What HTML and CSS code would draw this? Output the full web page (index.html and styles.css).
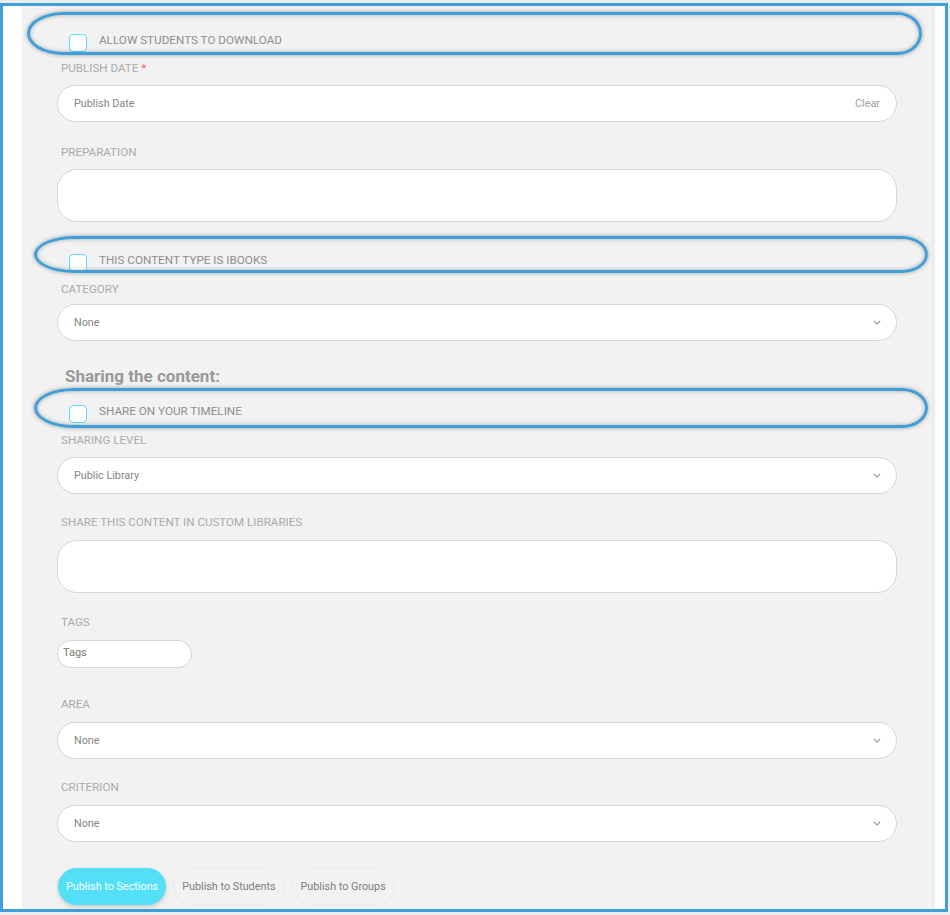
FILE: index.html
```html
<!DOCTYPE html>
<html>
<head>
<meta charset="utf-8">
<link rel="stylesheet" href="styles.css">
</head>
<body>
<div class="frame">
  <div class="panel">
    <div class="check check-first"><span class="box"></span><span class="check-text">ALLOW STUDENTS TO DOWNLOAD</span></div>

    <div class="field field-tight">
      <div class="label">PUBLISH DATE <span class="req">*</span></div>
      <div class="input"><span class="ph">Publish Date</span><span class="clear">Clear</span></div>
    </div>

    <div class="field">
      <div class="label">PREPARATION</div>
      <div class="textarea"></div>
    </div>

    <div class="check check-mid"><span class="box"></span><span class="check-text">THIS CONTENT TYPE IS IBOOKS</span></div>

    <div class="field field-after-check">
      <div class="label label-close">CATEGORY</div>
      <div class="input select"><span class="ph">None</span><svg class="chev" width="8" height="5" viewBox="0 0 8 5"><polyline points="0.8,0.8 4,4 7.2,0.8" fill="none" stroke="#8a96a8" stroke-width="1.1"/></svg></div>
    </div>

    <h3 class="heading">Sharing the content:</h3>

    <div class="check check-after-heading"><span class="box"></span><span class="check-text">SHARE ON YOUR TIMELINE</span></div>

    <div class="field field-after-check2">
      <div class="label">SHARING LEVEL</div>
      <div class="input select"><span class="ph">Public Library</span><svg class="chev" width="8" height="5" viewBox="0 0 8 5"><polyline points="0.8,0.8 4,4 7.2,0.8" fill="none" stroke="#8a96a8" stroke-width="1.1"/></svg></div>
    </div>

    <div class="field field-short">
      <div class="label label-loose">SHARE THIS CONTENT IN CUSTOM LIBRARIES</div>
      <div class="textarea"></div>
    </div>

    <div class="field field-tags">
      <div class="label label-loose">TAGS</div>
      <div class="tags">Tags</div>
    </div>

    <div class="field field-wide">
      <div class="label label-loose">AREA</div>
      <div class="input select"><span class="ph">None</span><svg class="chev" width="8" height="5" viewBox="0 0 8 5"><polyline points="0.8,0.8 4,4 7.2,0.8" fill="none" stroke="#8a96a8" stroke-width="1.1"/></svg></div>
    </div>

    <div class="field field-short">
      <div class="label label-loose">CRITERION</div>
      <div class="input select"><span class="ph">None</span><svg class="chev" width="8" height="5" viewBox="0 0 8 5"><polyline points="0.8,0.8 4,4 7.2,0.8" fill="none" stroke="#8a96a8" stroke-width="1.1"/></svg></div>
    </div>

    <div class="actions">
      <button class="btn btn-primary">Publish to Sections</button>
      <button class="btn">Publish to Students</button>
      <button class="btn">Publish to Groups</button>
    </div>
  </div>

  <div class="oval oval-1"></div>
  <div class="oval oval-2"></div>
  <div class="oval oval-3"></div>
</div>
</body>
</html>
```

FILE: styles.css
```css
html, body {
  margin: 0;
  padding: 0;
  background: #ececec;
}
body {
  font-family: Roboto, "Liberation Sans", Arial, sans-serif;
  width: 950px;
  height: 915px;
  overflow: hidden;
}
.frame {
  position: relative;
  margin-top: 3px;
  width: 948px;
  height: 909px;
  box-sizing: border-box;
  border: 3px solid #3f9fd8;
  background: #ffffff;
  padding: 0 13px 0 19px;
  overflow: hidden;
}
.panel {
  background: #f2f2f2;
  height: 100%;
  box-sizing: border-box;
  padding: 0 35px 0 35px;
  box-shadow: 2px 0 4px rgba(0,0,0,0.12);
}
.check {
  display: flex;
  align-items: center;
  height: 18px;
  padding-left: 12px;
}
.check-first { padding-top: 28px; }
.check-mid { margin-top: 32px; }
.check-after-heading { margin-top: 19px; }
.box {
  width: 16px;
  height: 16px;
  border: 1px solid #5fdcf3;
  border-radius: 4px;
  background: #fff;
  flex: none;
}
.check-text {
  margin-left: 12px;
  font-size: 11.7px;
  color: #8e8e8e;
  position: relative;
  top: -3px;
}
.field { margin-top: 22px; }
.field-tight { margin-top: 8px; }
.field-after-check { margin-top: 9px; }
.field-after-check2 { margin-top: 9px; }
.field-short { margin-top: 20px; }
.field-tags { margin-top: 21px; }
.field-wide { margin-top: 28px; }
.label {
  font-size: 11.6px;
  line-height: 16px;
  color: #ababab;
  padding-left: 4px;
  margin-bottom: 9px;
}
.label-close { margin-bottom: 7px; }
.label-loose { margin-bottom: 10px; }
.req { color: #f0645a; }
.input {
  height: 37px;
  box-sizing: border-box;
  border: 1px solid #d6d6d6;
  border-radius: 19px;
  background: #fff;
  display: flex;
  align-items: center;
  justify-content: space-between;
  padding: 0 16px;
}
.ph {
  font-size: 10.8px;
  color: #858585;
}
.clear {
  font-size: 10.8px;
  color: #a0a0a0;
}
.select { padding-right: 15px; }
.chev { display: block; }
.textarea {
  height: 53px;
  box-sizing: border-box;
  border: 1px solid #d6d6d6;
  border-radius: 20px;
  background: #fff;
}
.tags {
  width: 135px;
  height: 28px;
  box-sizing: border-box;
  border: 1px solid #d6d6d6;
  border-radius: 14px;
  background: #fff;
  font-size: 11px;
  color: #7a7a7a;
  display: flex;
  align-items: center;
  padding-left: 5px;
  padding-bottom: 3px;
}
.heading {
  margin: 25px 0 0 8px;
  font-size: 17px;
  line-height: 20px;
  font-weight: 700;
  color: #999999;
}
.actions {
  display: flex;
  gap: 7px;
  margin-top: 26px;
  padding-left: 1px;
}
.btn {
  font-family: Roboto, "Liberation Sans", Arial, sans-serif;
  height: 37px;
  border-radius: 19px;
  border: 1px solid #ebebeb;
  background: transparent;
  font-size: 10.8px;
  color: #7d7d7d;
  padding: 0 8px;
}
.btn-primary {
  background: #52dff7;
  border-color: #52dff7;
  color: #fff;
  padding: 0 7px;
  box-shadow: 0 2px 4px rgba(0,0,0,0.18);
}
.oval {
  position: absolute;
  box-sizing: border-box;
  border: 3px solid #3f9fd8;
  box-shadow: 0 0 4px rgba(0,0,0,0.35), inset 0 0 4px rgba(0,0,0,0.3);
}
.oval-1 {
  left: 24px;
  top: 6px;
  width: 895px;
  height: 43px;
  border-radius: 36px 24px 24px 36px / 50%;
}
.oval-2 {
  left: 31px;
  top: 230px;
  width: 894px;
  height: 37px;
  border-radius: 40px 26px 26px 40px / 50%;
}
.oval-3 {
  left: 31px;
  top: 382px;
  width: 894px;
  height: 40px;
  border-radius: 40px 26px 26px 40px / 50%;
}
```
